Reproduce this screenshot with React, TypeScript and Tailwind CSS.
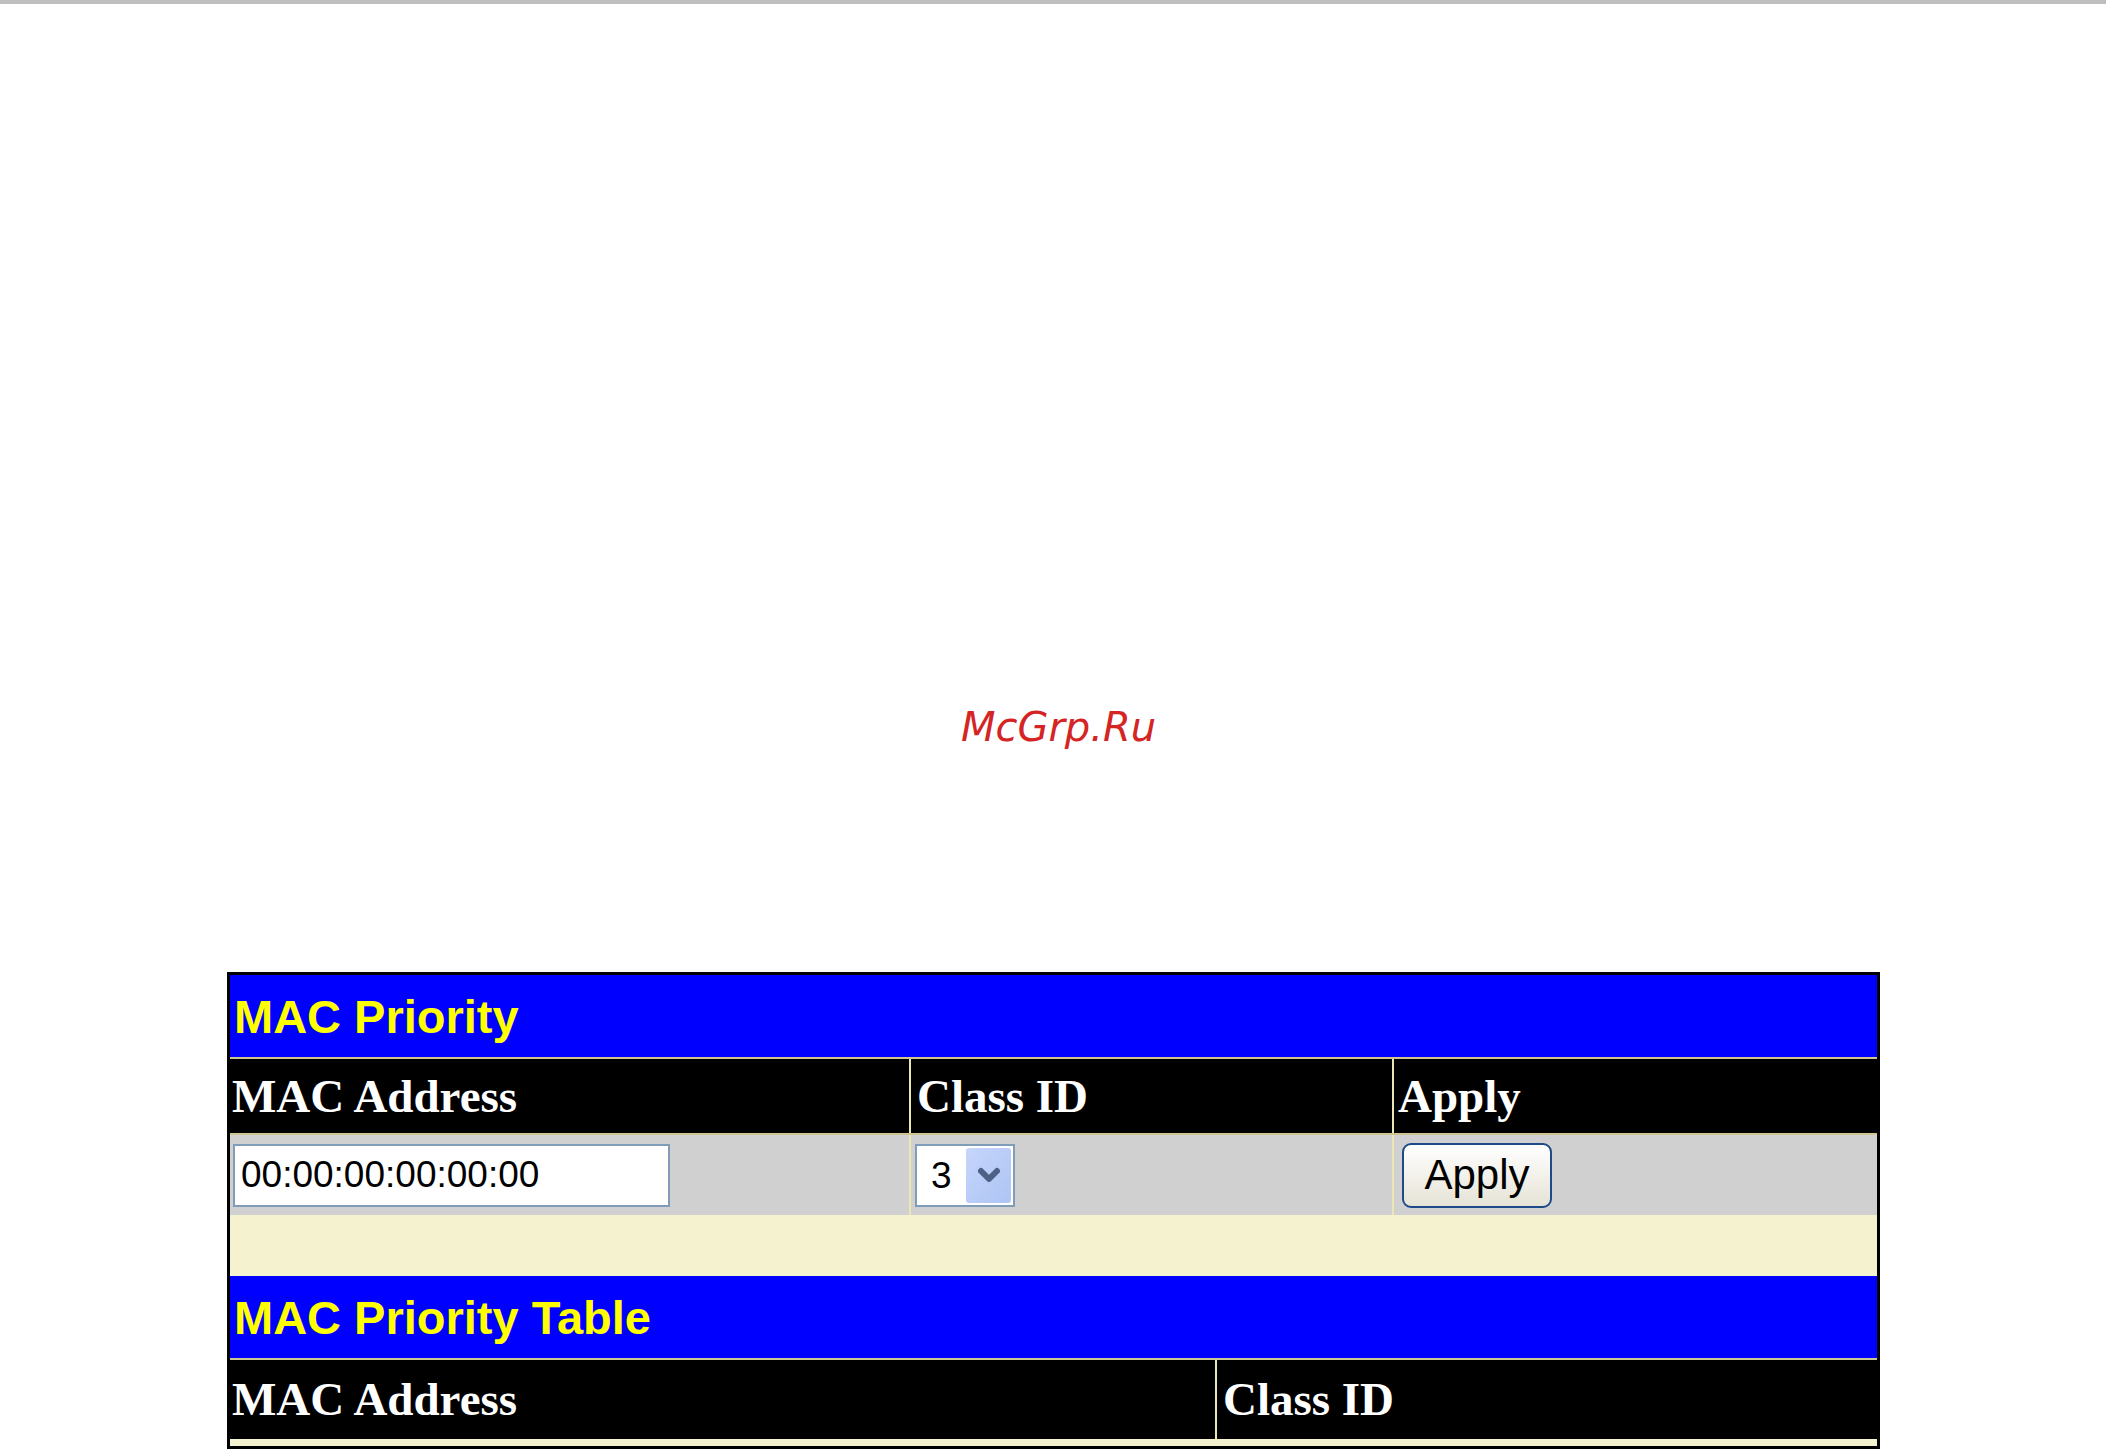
import { ChevronDown } from 'lucide-react';

const serif = { fontFamily: '"Liberation Serif", "Times New Roman", serif' };
const sans = { fontFamily: '"Liberation Sans", Arial, sans-serif' };

const TitleBar = ({ title }: { title: string }) => (
  <div className="flex h-[82px] items-center bg-[#0000ff] pl-[4px]">
    <span className="text-[47px] font-bold leading-none text-[#ffff00]" style={sans}>
      {title}
    </span>
  </div>
);

const HeadCell = ({ label, pad, tall }: { label: string; pad: string; tall?: boolean }) => (
  <div className={`flex items-center bg-black ${tall ? 'h-[79px]' : 'h-[74px]'} ${pad}`}>
    <span className="text-[47px] font-bold leading-none text-white" style={serif}>
      {label}
    </span>
  </div>
);

const App = () => {
  return (
    <div className="min-h-screen bg-white">
      <div className="h-[4px] bg-[#bebebe]" />

      {/* watermark */}
      <div className="flex justify-center pl-[11px] pt-[703px]">
        <span
          className="text-[40px] italic leading-none text-[#d42424]"
          style={{ fontFamily: '"DejaVu Sans", sans-serif' }}
        >
          McGrp.Ru
        </span>
      </div>

      <div className="ml-[227px] mt-[225px] flex w-[1653px] flex-col border-[3px] border-black bg-[#f5f2cf]">
        {/* MAC Priority */}
        <div className="flex flex-col gap-y-[2px] bg-[#cdc593]">
          <TitleBar title="MAC Priority" />
          <div className="grid grid-cols-[679px_481px_483px] gap-x-[2px] bg-[#ebe7b5]">
            <HeadCell label="MAC Address" pad="pl-[2px]" />
            <HeadCell label="Class ID" pad="pl-[6px]" />
            <HeadCell label="Apply" pad="pl-[4px]" />
          </div>
          <div className="grid h-[80px] grid-cols-[679px_481px_483px] gap-x-[2px] bg-[#ebe7b5]">
            <div className="flex items-center bg-[#d0d0d0] pl-[3px]">
              <input
                readOnly
                value="00:00:00:00:00:00"
                className="h-[63px] w-[437px] border-2 border-[#7f9db9] bg-white pl-[6px] text-[37px] text-black outline-none"
                style={sans}
              />
            </div>
            <div className="flex items-center bg-[#d0d0d0] pl-[4px]">
              <div className="flex h-[63px] w-[100px] items-center border-2 border-[#7f9db9] bg-white">
                <span className="flex-1 pl-[14px] text-[37px] leading-none text-black" style={sans}>
                  3
                </span>
                <div className="mr-[2px] flex h-[55px] w-[45px] items-center justify-center rounded-[3px] bg-gradient-to-br from-[#c6d6fc] to-[#aec4f4]">
                  <ChevronDown size={32} strokeWidth={4.5} className="text-[#4d6185]" />
                </div>
              </div>
            </div>
            <div className="flex items-center bg-[#d0d0d0] pl-[8px]">
              <button
                type="button"
                className="flex h-[65px] w-[150px] items-center justify-center rounded-[9px] border-2 border-[#1d4b8a] bg-gradient-to-b from-white to-[#e6e3d6] text-[42px] leading-none text-black"
                style={sans}
              >
                Apply
              </button>
            </div>
          </div>
        </div>

        {/* spacer row */}
        <div className="h-[61px] bg-[#f5f2cf]" />

        {/* MAC Priority Table */}
        <div className="flex flex-col gap-y-[2px] bg-[#cdc593]">
          <TitleBar title="MAC Priority Table" />
          <div className="grid grid-cols-[985px_660px] gap-x-[2px] bg-[#ebe7b5]">
            <HeadCell label="MAC Address" pad="pl-[2px]" tall />
            <HeadCell label="Class ID" pad="pl-[6px]" tall />
          </div>
        </div>
        <div className="h-[7px] bg-[#f5f2cf]" />
      </div>
    </div>
  );
};

export default App;
